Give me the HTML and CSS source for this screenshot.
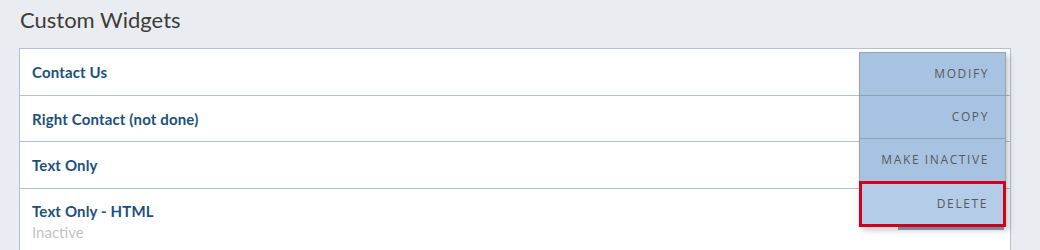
FILE: index.html
```html
<!DOCTYPE html>
<html lang="en">
<head>
<meta charset="utf-8">
<title>Custom Widgets</title>
<link rel="stylesheet" href="styles.css">
</head>
<body>
<div class="page">
  <h1 class="title">Custom Widgets</h1>
  <div class="panel">
    <div class="row"><span class="name">Contact Us</span></div>
    <div class="row"><span class="name">Right Contact (not done)</span></div>
    <div class="row"><span class="name">Text Only</span></div>
    <div class="row row-last">
      <span class="name">Text Only - HTML</span>
      <span class="status">Inactive</span>
    </div>
    <div class="trigger"></div>
    <ul class="menu">
      <li class="item">MODIFY</li>
      <li class="item">COPY</li>
      <li class="item">MAKE INACTIVE</li>
      <li class="item item-focus">DELETE</li>
    </ul>
  </div>
</div>
</body>
</html>
```
FILE: styles.css
```css
html, body {
  margin: 0;
  padding: 0;
  background: #e9edf2;
}
.page {
  padding: 0 29px 0 19px;
  font-family: Lato, "Noto Sans", sans-serif;
}
.title {
  margin: 0;
  padding: 7px 0 0 1px;
  height: 41px;
  font-size: 22px;
  line-height: 26px;
  font-weight: 400;
  color: #3f3b38;
}
.panel {
  position: relative;
  background: #fff;
  border: 1px solid #b3c1d5;
  border-bottom: none;
  height: 210px;
}
.row {
  display: flex;
  flex-direction: column;
  padding: 13px 12px;
  border-bottom: 1px solid #b3c1d5;
  height: 19.5px;
}
.row-last {
  height: auto;
  padding-top: 12px;
  border-bottom: none;
}
.name {
  font-size: 15px;
  line-height: 20px;
  font-weight: 700;
  letter-spacing: 0.15px;
  color: #1d4f7c;
}
.status {
  font-size: 15px;
  line-height: 22px;
  color: #c3c3c3;
}
.trigger {
  position: absolute;
  left: 878px;
  top: 150px;
  width: 106px;
  height: 31px;
  background: #8aa1bc;
}
.menu {
  position: absolute;
  left: 839px;
  top: 3px;
  width: 145px;
  margin: 0;
  padding: 0;
  list-style: none;
  border: 1px solid #9aa3ad;
  border-bottom: none;
  box-shadow: 3px 3px 6px rgba(0, 0, 0, 0.22);
  font-family: "Open Sans", "Noto Sans", sans-serif;
}
.item {
  height: 42px;
  line-height: 42px;
  padding-right: 16px;
  text-align: right;
  font-size: 12px;
  letter-spacing: 1.6px;
  color: #555a60;
  background: #a8c3e1;
  border-bottom: 1px solid #8aa0b8;
}
.item-focus {
  height: 40px;
  line-height: 40px;
  margin: -1px -1px 0 -1px;
  padding-right: 15px;
  background: #b4cce7;
  border: 3px solid #d0021b;
}
```
